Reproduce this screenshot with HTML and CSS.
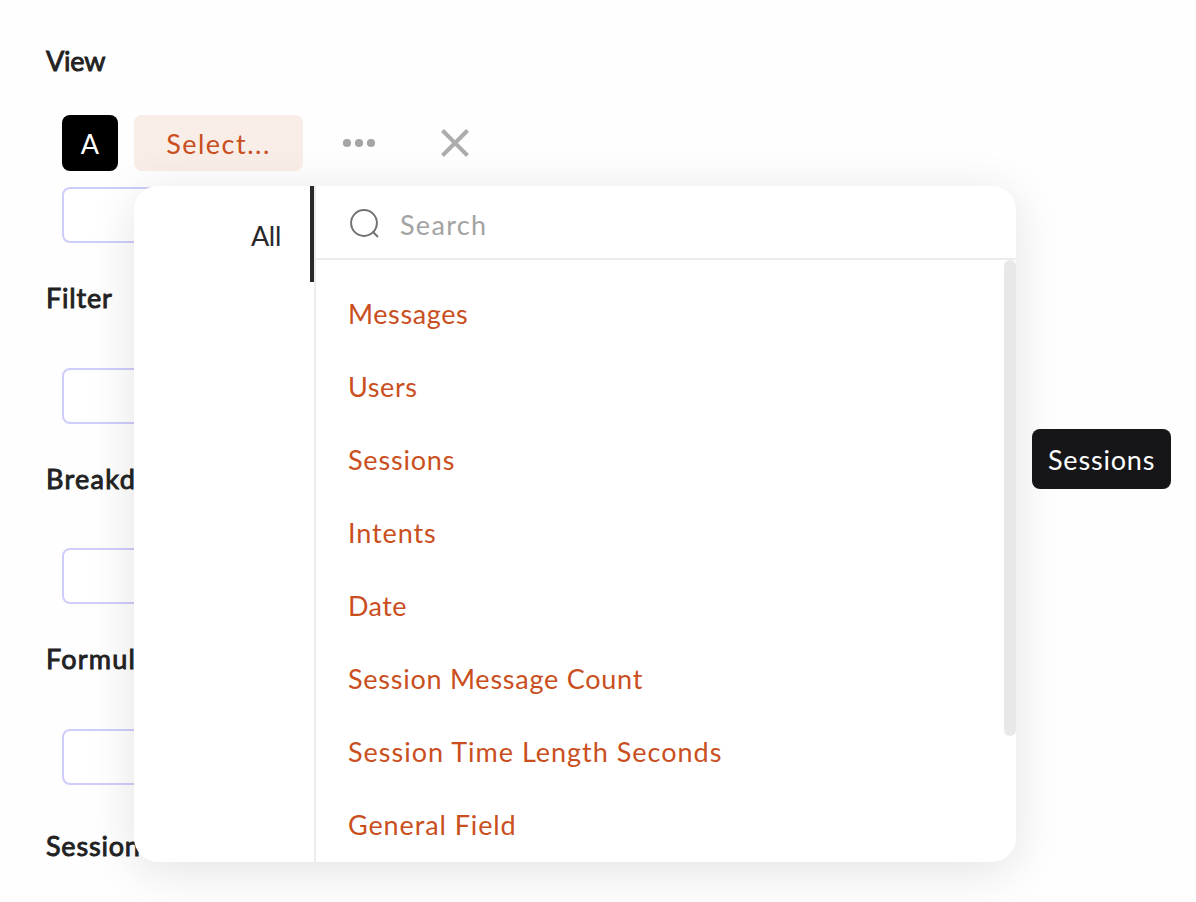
FILE: index.html
```html
<!DOCTYPE html>
<html lang="en">
<head>
<meta charset="utf-8">
<title>Report builder</title>
<link rel="stylesheet" href="styles.css">
</head>
<body>
<main class="builder">
  <section class="group view">
    <h2 class="title t-view">View</h2>
    <div class="row">
      <span class="letter">A</span>
      <button class="select">Select...</button>
      <svg class="more" width="34" height="10" viewBox="0 0 34 10"><circle cx="5" cy="5" r="4.1"/><circle cx="17" cy="5" r="4.1"/><circle cx="29" cy="5" r="4.1"/></svg>
      <svg class="close" width="28" height="28" viewBox="0 0 28 28"><path d="M1.5 1.5 26.500 26.500M26.500 1.500 1.500 26.500"/></svg>
    </div>
    <div class="field"></div>
  </section>
  <section class="group filter"><h2 class="title">Filter</h2><div class="field"></div></section>
  <section class="group breakdown"><h2 class="title">Breakdown</h2><div class="field"></div></section>
  <section class="group formula"><h2 class="title">Formula</h2><div class="field"></div></section>
  <section class="group session"><h2 class="title">Session</h2></section>
</main>
<div class="menu">
  <nav class="tabs"><div class="tab">All</div></nav>
  <div class="content">
    <div class="search">
      <svg class="glass" width="30" height="30" viewBox="0 0 30 30"><circle cx="14" cy="14" r="12.900"/><path d="M22.500 22.500 28 28"/></svg>
      <span>Search</span>
    </div>
    <div class="list">
      <ul class="items">
        <li class="i-messages">Messages</li>
        <li class="i-users">Users</li>
        <li class="i-sessions">Sessions</li>
        <li class="i-intents">Intents</li>
        <li class="i-date">Date</li>
        <li class="i-count">Session Message Count</li>
        <li class="i-length">Session Time Length Seconds</li>
        <li class="i-general">General Field</li>
      </ul>
      <div class="thumb"></div>
    </div>
  </div>
</div>
<div class="tooltip i-sessions">Sessions</div>
</body>
</html>
```
FILE: styles.css
```css
* { box-sizing: border-box; }
body {
  margin: 0;
  width: 1196px;
  height: 902px;
  overflow: hidden;
  background: #fefefe;
  font: 400 27px/32px Lato, sans-serif;
  letter-spacing: 0.9px;
  color: #222;
}
.builder { padding: 45px 0 0 46px; }
.title {
  margin: 0;
  font: inherit;
  letter-spacing: 0.8px;
  -webkit-text-stroke: 0.9px #222;
}
.t-view { letter-spacing: -0.2px; }
.breakdown .title { letter-spacing: 1.3px; }
.formula .title { letter-spacing: 1.2px; }
.row { display: flex; align-items: center; height: 56px; margin: 38px 0 16px 16px; }
.letter, .select {
  display: flex;
  align-items: center;
  justify-content: center;
  height: 56px;
  border-radius: 8px;
  padding: 2px 0 0;
}
.letter { width: 56px; background: #000; color: #fff; letter-spacing: 0; }
.select {
  width: 169px;
  margin-left: 16px;
  border: 0;
  background: #f9ede7;
  color: #c94f21;
  font: inherit;
  letter-spacing: 1.5px;
}
.more { margin-left: 39px; fill: #a5a5a5; }
.close { margin-left: 65px; fill: none; stroke: #acacac; stroke-width: 4; }
.field {
  width: 240px;
  height: 56px;
  margin-left: 16px;
  border: 2px solid #cfcdfa;
  border-radius: 8px;
  background: #fff;
}
.filter, .breakdown, .formula { padding-top: 39px; }
.filter .title, .formula .title { margin-bottom: 54px; }
.breakdown .title { margin-bottom: 53px; }
.session { padding-top: 45px; }

.menu {
  position: absolute;
  left: 134px;
  top: 186px;
  display: flex;
  width: 882px;
  height: 676px;
  border-radius: 24px;
  background: #fff;
  box-shadow: 0 8px 48px rgba(0, 0, 0, 0.11);
  overflow: hidden;
}
.tabs { width: 182px; border-right: 2px solid #ececec; }
.tab {
  width: 180px;
  height: 96px;
  padding: 34px 29px 0 0;
  border-right: 4px solid #2a282a;
  text-align: right;
  color: #29292c;
  letter-spacing: -0.3px;
}
.content { flex: 1; }
.search {
  display: flex;
  align-items: center;
  gap: 20.5px;
  height: 74px;
  padding: 6px 0 0 33.5px;
  border-bottom: 2px solid #ececec;
  color: #a3a3a3;
  letter-spacing: 1.3px;
}
.glass { margin-top: -3px; fill: none; stroke: #727272; stroke-width: 2; }
.list { display: flex; justify-content: space-between; }
.items { margin: 0; padding: 20px 0 0 32px; list-style: none; color: #c94f21; }
.items li { height: 73px; padding-top: 18px; white-space: nowrap; }
.i-messages { letter-spacing: 0.6px; }
.i-users { letter-spacing: 0.6px; }
.i-sessions { letter-spacing: 0.8px; }
.i-intents { letter-spacing: 0.9px; }
.i-date { letter-spacing: 0.4px; }
.i-count { letter-spacing: 0.75px; }
.i-length { letter-spacing: 1px; }
.thumb { width: 12px; height: 476px; border-radius: 6px; background: #e8e8e9; }
.tooltip {
  position: absolute;
  left: 1032px;
  top: 429px;
  width: 139px;
  height: 60px;
  padding: 15px 0 0 16px;
  border-radius: 8px;
  background: #161618;
  color: #fff;
}
```
